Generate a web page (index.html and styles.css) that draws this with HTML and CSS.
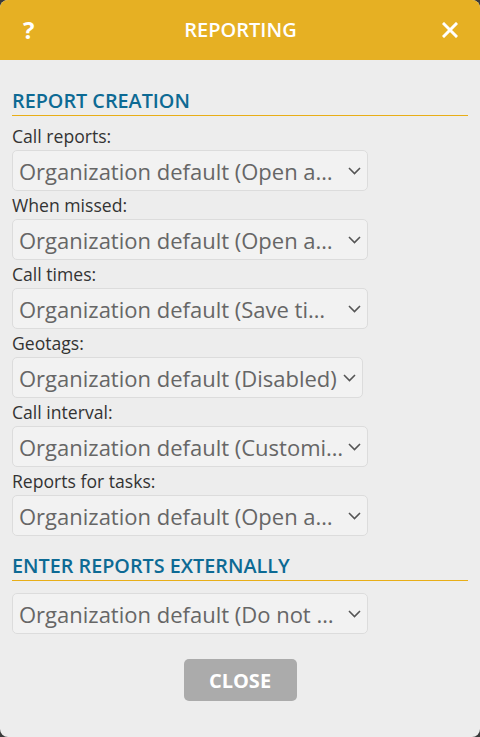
FILE: index.html
```html
<!DOCTYPE html>
<html lang="en">
<head>
<meta charset="utf-8">
<title>Reporting</title>
<link rel="stylesheet" href="styles.css">
</head>
<body>
<div class="dialog">
  <header class="dialog-header">
    <span class="help">?</span>
    <h1 class="title">REPORTING</h1>
    <svg class="close-x" width="16" height="16" viewBox="0 0 16 16" aria-hidden="true"><path d="M2 2 L14 14 M14 2 L2 14" stroke="#fff" stroke-width="3" stroke-linecap="square" fill="none"/></svg>
  </header>
  <main class="dialog-body">
    <section class="section">
      <h2 class="section-title">REPORT CREATION</h2>
      <div class="field">
        <label class="field-label">Call reports:</label>
        <div class="select"><span class="select-text">Organization default (Open a…</span><svg class="chev" width="13" height="8" viewBox="0 0 13 8"><path d="M1 1 L6.5 6.5 L12 1" stroke="#555" stroke-width="1.6" fill="none"/></svg></div>
      </div>
      <div class="field">
        <label class="field-label">When missed:</label>
        <div class="select"><span class="select-text">Organization default (Open a…</span><svg class="chev" width="13" height="8" viewBox="0 0 13 8"><path d="M1 1 L6.5 6.5 L12 1" stroke="#555" stroke-width="1.6" fill="none"/></svg></div>
      </div>
      <div class="field">
        <label class="field-label">Call times:</label>
        <div class="select"><span class="select-text">Organization default (Save ti…</span><svg class="chev" width="13" height="8" viewBox="0 0 13 8"><path d="M1 1 L6.5 6.5 L12 1" stroke="#555" stroke-width="1.6" fill="none"/></svg></div>
      </div>
      <div class="field">
        <label class="field-label">Geotags:</label>
        <div class="select select-fit"><span class="select-text">Organization default (Disabled)</span><svg class="chev" width="13" height="8" viewBox="0 0 13 8"><path d="M1 1 L6.5 6.5 L12 1" stroke="#555" stroke-width="1.6" fill="none"/></svg></div>
      </div>
      <div class="field">
        <label class="field-label">Call interval:</label>
        <div class="select"><span class="select-text">Organization default (Customi…</span><svg class="chev" width="13" height="8" viewBox="0 0 13 8"><path d="M1 1 L6.5 6.5 L12 1" stroke="#555" stroke-width="1.6" fill="none"/></svg></div>
      </div>
      <div class="field">
        <label class="field-label">Reports for tasks:</label>
        <div class="select"><span class="select-text">Organization default (Open a…</span><svg class="chev" width="13" height="8" viewBox="0 0 13 8"><path d="M1 1 L6.5 6.5 L12 1" stroke="#555" stroke-width="1.6" fill="none"/></svg></div>
      </div>
    </section>
    <section class="section section-external">
      <h2 class="section-title">ENTER REPORTS EXTERNALLY</h2>
      <div class="field field-spaced">
        <div class="select"><span class="select-text">Organization default (Do not …</span><svg class="chev" width="13" height="8" viewBox="0 0 13 8"><path d="M1 1 L6.5 6.5 L12 1" stroke="#555" stroke-width="1.6" fill="none"/></svg></div>
      </div>
    </section>
    <div class="actions">
      <button class="btn-close" type="button">CLOSE</button>
    </div>
  </main>
</div>
</body>
</html>
```

FILE: styles.css
```css
html, body {
  margin: 0;
  padding: 0;
  background: #3a3a3a;
  height: 100%;
}
body {
  font-family: "Open Sans", "Noto Sans", sans-serif;
}
.dialog {
  width: 480px;
  height: 737px;
  background: #ededed;
  border-radius: 8px;
  overflow: hidden;
  display: flex;
  flex-direction: column;
}
.dialog-header {
  height: 60px;
  background: #e6b023;
  display: flex;
  align-items: center;
  padding: 0 22px 0 23px;
  color: #fff;
  flex-shrink: 0;
}
.help {
  font-weight: 700;
  font-size: 24px;
  width: 16px;
  line-height: 1;
}
.title {
  flex: 1;
  text-align: center;
  margin: 0;
  font-size: 20px;
  font-weight: 600;
  letter-spacing: 0;
  line-height: 1;
}
.close-x {
  display: block;
}
.dialog-body {
  padding: 29px 12px 0 12px;
  display: flex;
  flex-direction: column;
}
.section-title {
  margin: 0;
  font-size: 19.8px;
  font-weight: 600;
  color: #0d6a94;
  line-height: 24px;
  padding-bottom: 2px;
  border-bottom: 1px solid #e8ae17;
}
.section {
  display: flex;
  flex-direction: column;
}
.field {
  display: flex;
  flex-direction: column;
  align-items: flex-start;
}
.field-label {
  font-size: 17.6px;
  color: #333;
  line-height: 28px;
  margin-top: 6px;
}
.field + .field .field-label {
  margin-top: 0;
}
.field-spaced {
  margin-top: 12px;
}
.section-external {
  margin-top: 18px;
}
.select {
  box-sizing: border-box;
  width: 356px;
  height: 41px;
  background: #f2f2f2;
  border: 1px solid #dcdcdc;
  border-radius: 5px;
  display: flex;
  align-items: center;
  padding: 0 6px 0 6px;
  gap: 3px;
}
.select-fit {
  width: auto;
  gap: 6px;
}
.select-text {
  flex: 1;
  white-space: nowrap;
  overflow: hidden;
  text-overflow: clip;
  font-size: 22px;
  color: #666;
  line-height: 28px;
}
.chev {
  flex-shrink: 0;
  display: block;
}
.actions {
  display: flex;
  justify-content: center;
  margin-top: 25px;
}
.btn-close {
  width: 113px;
  height: 42px;
  border: none;
  border-radius: 5px;
  background: #ababab;
  color: #fff;
  font-family: "Open Sans", "Noto Sans", sans-serif;
  font-weight: 700;
  font-size: 20px;
  padding: 0;
}
```
